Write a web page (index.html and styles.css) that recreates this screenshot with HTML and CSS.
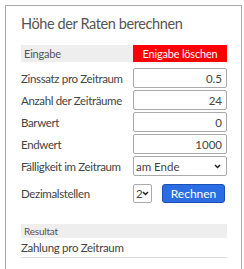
FILE: index.html
```html
<!DOCTYPE html>
<html lang="de">
<head>
    <meta charset="UTF-8">
    <meta name="viewport" content="width=device-width, initial-scale=1.0">
    <title>Höhe der Raten berechnen</title>
    <link rel="stylesheet" href="styles.css">
</head>
<body>

    <div class="card">
        <h1 class="title">Höhe der Raten berechnen</h1>

        <div class="band">
            <span class="band-label">Eingabe</span>
            <button class="clear">Enigabe löschen</button>
        </div>

        <form class="form">
            <label>Zinssatz pro Zeitraum</label>
            <input type="text" value="0.5">

            <label>Anzahl der Zeiträume</label>
            <input type="text" value="24">

            <label>Barwert</label>
            <input type="text" value="0">

            <label>Endwert</label>
            <input type="text" value="1000">

            <label>Fälligkeit im Zeitraum</label>
            <select>
                <option>am Ende</option>
                <option>am Anfang</option>
            </select>

            <label class="gap">Dezimalstellen</label>
            <div class="actions gap">
                <select class="small">
                    <option>2</option>
                </select>
                <button type="button" class="calc">Rechnen</button>
            </div>
        </form>

        <div class="band result">
            <span class="band-label">Resultat</span>
        </div>
        <div class="result-row">Zahlung pro Zeitraum</div>
    </div>

</body>
</html>
```

FILE: styles.css
```css
body {
    margin: 0;
    padding: 5px;
    font-family: 'Lato', sans-serif;
    background: #fff;
    color: #444;
}

.card {
    width: 206px;
    height: 250px;
    padding: 8px 14px 5px 15px;
    border: 1px solid #aaa;
}

.title {
    margin: 0 0 11px 0;
    font-size: 14.5px;
    font-weight: normal;
    line-height: 20px;
    letter-spacing: -0.4px;
    color: #555;
}

.band {
    display: flex;
    justify-content: space-between;
    align-items: center;
    height: 17px;
    background: #eee;
}

.band-label {
    padding-left: 3px;
    font-size: 11px;
    letter-spacing: -0.2px;
    color: #555;
}

.clear {
    width: 94px;
    height: 17px;
    margin: 0;
    padding: 0;
    border: none;
    background: #f00;
    color: #fff;
    font-family: 'Lato', sans-serif;
    font-size: 11px;
    letter-spacing: -0.2px;
}

.form {
    display: grid;
    grid-template-columns: 112px 94px;
    row-gap: 2px;
    align-items: center;
    margin-top: 6px;
}

.form label {
    font-size: 11.5px;
    letter-spacing: -0.35px;
    color: #444;
    white-space: nowrap;
}

.form input,
.form select {
    box-sizing: border-box;
    width: 94px;
    height: 20px;
    margin: 0;
    padding: 0 4px;
    border: 1px solid #aaa;
    border-radius: 2px;
    background: #fff;
    font-family: 'Lato', sans-serif;
    font-size: 11.5px;
    color: #444;
}

.form input {
    text-align: right;
}

.form select {
    -webkit-appearance: none;
    appearance: none;
    padding: 0 0 0 2px;
    background: #fff url("data:image/svg+xml,%3Csvg xmlns='http://www.w3.org/2000/svg' width='7' height='5'%3E%3Cpath d='M1 1l2.5 2.5 2.5-2.5' fill='none' stroke='%23222' stroke-width='1.5'/%3E%3C/svg%3E") no-repeat right 5px center;
}

.gap {
    margin-top: 6px;
}

.actions {
    display: flex;
    justify-content: space-between;
    align-items: center;
}

.form select.small {
    flex: none;
    width: 19px;
    min-width: 19px;
    height: 19px;
    padding: 0 0 0 2px;
    background-position: right 2px center;
}

.calc {
    box-sizing: border-box;
    width: 63px;
    height: 19px;
    margin: 0 2px 0 0;
    padding: 0;
    border: 1px solid #1b4fb5;
    border-radius: 3px;
    background: #2b6de3;
    color: #fff;
    font-family: 'Lato', sans-serif;
    font-size: 12px;
}

.result {
    height: 14px;
    margin-top: 21px;
}

.result .band-label {
    font-size: 10px;
}

.result-row {
    padding: 3px 0 3px 0;
    border-bottom: 1px solid #ddd;
    font-size: 11.5px;
    letter-spacing: -0.3px;
    color: #444;
}
```
